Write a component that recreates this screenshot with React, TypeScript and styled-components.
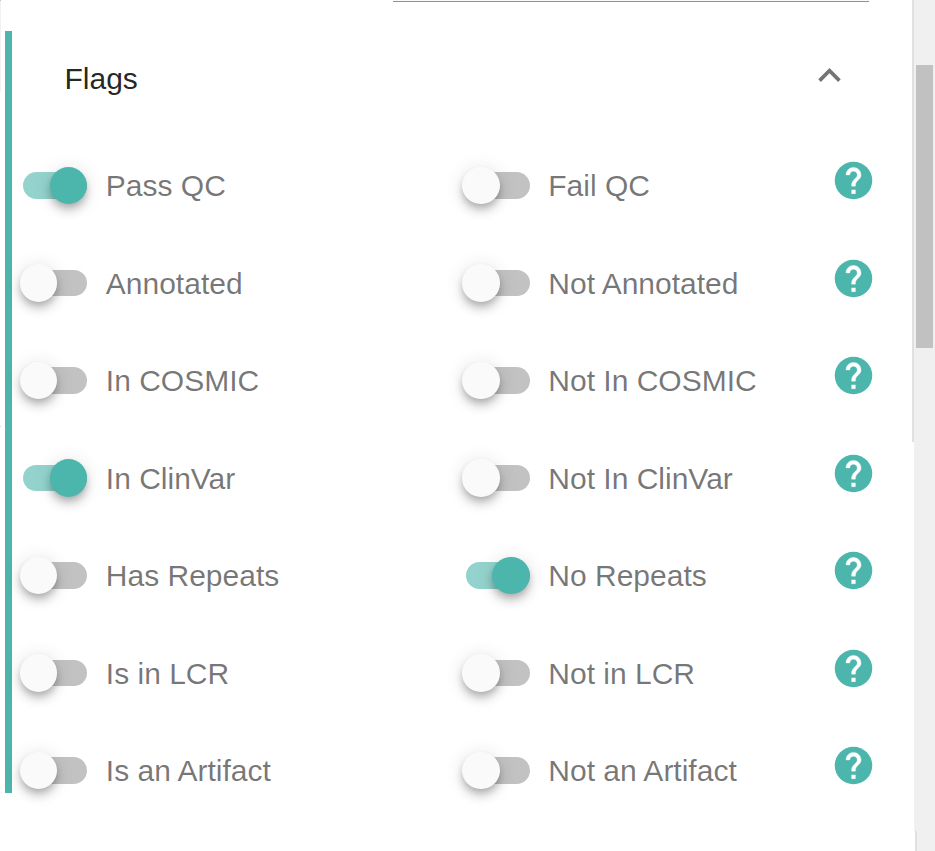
import React, { useState } from "react";
import styled, { createGlobalStyle } from "styled-components";

const TEAL = "#4db6ac";

const GlobalStyle = createGlobalStyle`
  *, *::before, *::after { box-sizing: border-box; }
  body { margin: 0; background: #fff; overflow: hidden; }
`;

const Page = styled.div`
  display: flex;
  width: 935px;
  height: 851px;
  overflow: hidden;
  background: #fff;
  font-family: "Liberation Sans", Arial, sans-serif;
`;

const PageEdge = styled.div`
  width: 1px;
  height: 427px;
  border-bottom: 1px solid #dcdcdc;
`;

const PageEdgeShade = styled.div`
  height: 92px;
  background: #f2f2f2;
  border-top: 1px solid #c4c4c4;
`;

const Content = styled.main`
  width: 911px;
  padding-left: 4px;
`;

const FieldUnderline = styled.div`
  width: 476px;
  height: 2px;
  margin-left: 388px;
  border-top: 1px solid #fbfbfb;
  border-bottom: 1px solid #919191;
`;

const Panel = styled.section`
  height: 762px;
  margin-top: 29px;
  border-left: 7px solid ${TEAL};
`;

const PanelHeader = styled.header`
  display: flex;
  justify-content: space-between;
  align-items: flex-start;
  height: 105.75px;
  padding: 22px 60px 0 52.5px;
`;

const Title = styled.h2`
  margin: 8px 0 0;
  font-size: 30px;
  font-weight: 400;
  line-height: 36px;
  color: rgba(0, 0, 0, 0.87);
`;

const Icon = styled.svg<{ $color: string }>`
  display: block;
  width: 45px;
  height: 45px;
  fill: ${(p) => p.$color};
`;

const Row = styled.div`
  display: grid;
  grid-template-columns: 442.5px 368.5px 45px;
  height: 97.5px;
  padding-left: 7.5px;
`;

const Cell = styled.label`
  display: flex;
  align-items: center;
  height: 97.5px;
  cursor: pointer;
`;

const HelpCell = styled.div`
  padding: 21.5px 0 0;
`;

const SwitchButton = styled.button`
  display: flex;
  align-items: center;
  flex: none;
  width: 68px;
  height: 38px;
  padding: 0;
  border: 0;
  cursor: pointer;
  background: transparent;
`;

const Track = styled.span<{ $on: boolean }>`
  display: flex;
  align-items: center;
  width: 64px;
  height: 26.5px;
  margin-left: 3.5px;
  border-radius: 14px;
  background: ${(p) => (p.$on ? "#94d3cd" : "#c2c2c2")};
`;

const Thumb = styled.span<{ $on: boolean }>`
  flex: none;
  width: 37.5px;
  height: 37.5px;
  margin-left: ${(p) => (p.$on ? "26.5px" : "-3.5px")};
  border-radius: 50%;
  background: ${(p) => (p.$on ? TEAL : "#fafafa")};
  box-shadow:
    0 3.75px 7.5px -1.9px rgba(0, 0, 0, 0.2),
    0 7.5px 9.4px 0 rgba(0, 0, 0, 0.14),
    0 1.9px 18.75px 0 rgba(0, 0, 0, 0.12);
`;

const LabelText = styled.span`
  margin-left: 18.3px;
  padding-top: 1.2px;
  font-size: 30px;
  line-height: 36px;
  white-space: nowrap;
  color: rgba(0, 0, 0, 0.54);
`;

const DrawerEdge = styled.div`
  width: 2px;
  height: 442px;
  background: #e0e0e0;
`;

const ScrollColumn = styled.aside`
  width: 21px;
`;

const ScrollTrack = styled.div`
  height: 831px;
  padding: 65px 2px 0;
  background: #f0f0f0;
`;

const ScrollThumb = styled.div`
  height: 283px;
  background: #c1c1c1;
`;

const ScrollFoot = styled.div`
  height: 20px;
  margin-left: 1px;
  border-left: 2px solid #e0e0e0;
  background: #f0f0f0;
`;

interface FlagPair {
  left: string;
  right: string;
  leftOn?: boolean;
  rightOn?: boolean;
}

const flags: FlagPair[] = [
  { left: "Pass QC", right: "Fail QC", leftOn: true },
  { left: "Annotated", right: "Not Annotated" },
  { left: "In COSMIC", right: "Not In COSMIC" },
  { left: "In ClinVar", right: "Not In ClinVar", leftOn: true },
  { left: "Has Repeats", right: "No Repeats", rightOn: true },
  { left: "Is in LCR", right: "Not in LCR" },
  { left: "Is an Artifact", right: "Not an Artifact" },
];

function FlagSwitch({ label, initial = false }: { label: string; initial?: boolean }) {
  const [on, setOn] = useState(initial);
  return (
    <Cell>
      <SwitchButton type="button" role="switch" aria-checked={on} onClick={() => setOn(!on)}>
        <Track $on={on}>
          <Thumb $on={on} />
        </Track>
      </SwitchButton>
      <LabelText>{label}</LabelText>
    </Cell>
  );
}

const HelpIcon = () => (
  <Icon viewBox="0 0 24 24" $color={TEAL}>
    <circle cx="12" cy="12" r="10" />
    <path
      fill="#fff"
      stroke="#fff"
      strokeWidth="0.2"
      d="M13 19h-2v-2h2v2zm2.07-7.75l-.9.92C13.45 12.9 13 13.5 13 15h-2v-.5c0-1.1.45-2.1 1.17-2.83l1.24-1.26c.37-.36.59-.86.59-1.41 0-1.1-.9-2-2-2s-2 .9-2 2H8c0-2.21 1.79-4 4-4s4 1.79 4 4c0 .88-.36 1.68-.93 2.25z"
    />
  </Icon>
);

const CollapseIcon = () => (
  <Icon viewBox="0 0 24 24" $color="#757575">
    <path d="M7.41 15.41L12 10.83l4.59 4.58L18 14l-6-6-6 6z" />
  </Icon>
);

export default function App() {
  return (
    <Page>
      <GlobalStyle />
      <PageEdge>
        <PageEdgeShade />
      </PageEdge>
      <Content>
        <FieldUnderline />
        <Panel>
          <PanelHeader>
            <Title>Flags</Title>
            <CollapseIcon />
          </PanelHeader>
          {flags.map((f) => (
            <Row key={f.left}>
              <FlagSwitch label={f.left} initial={f.leftOn} />
              <FlagSwitch label={f.right} initial={f.rightOn} />
              <HelpCell>
                <HelpIcon />
              </HelpCell>
            </Row>
          ))}
        </Panel>
      </Content>
      <DrawerEdge />
      <ScrollColumn>
        <ScrollTrack>
          <ScrollThumb />
        </ScrollTrack>
        <ScrollFoot />
      </ScrollColumn>
    </Page>
  );
}
